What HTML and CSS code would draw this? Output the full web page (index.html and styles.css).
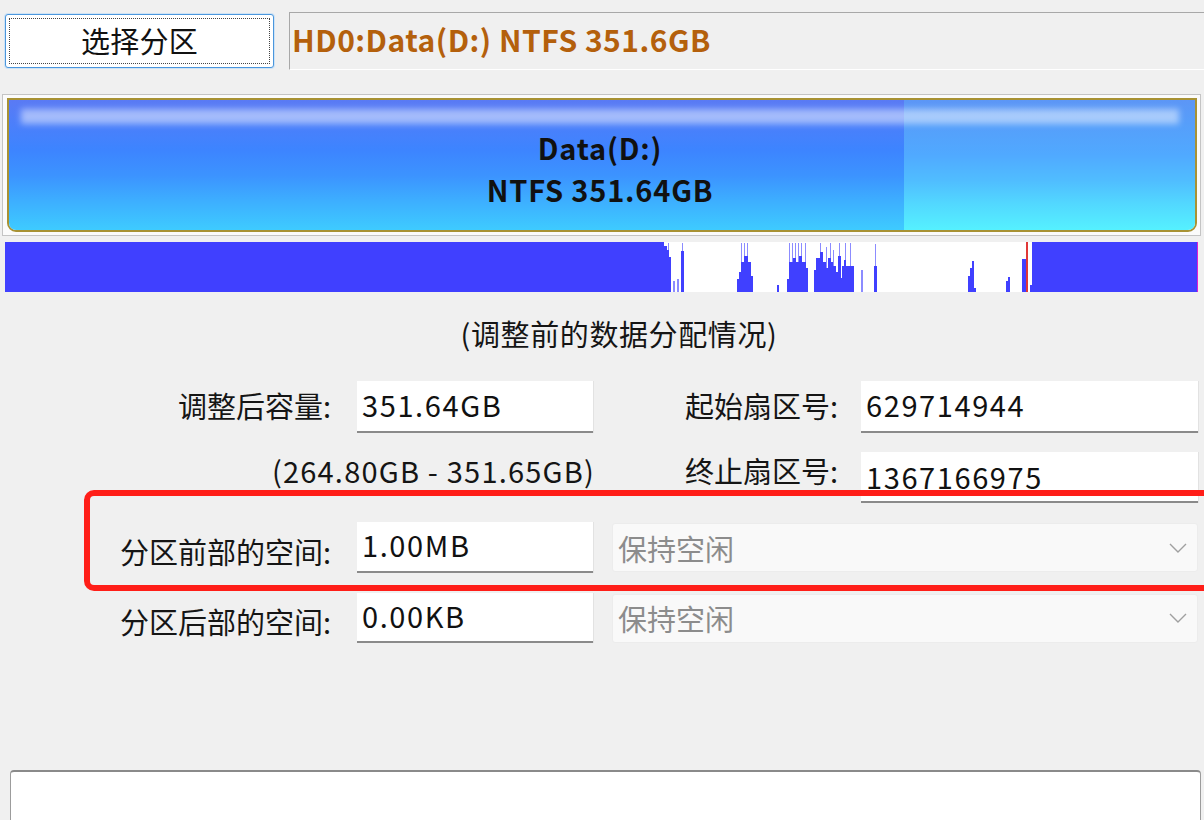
FILE: index.html
```html
<!DOCTYPE html>
<html lang="zh-CN">
<head>
<meta charset="utf-8">
<title>调整分区</title>
<link rel="stylesheet" href="styles.css">
</head>
<body>
<div class="app">
  <div class="top">
    <button class="pick"><span class="focus">选择分区</span></button>
    <div class="info">HD0:Data(D:) NTFS 351.6GB</div>
  </div>

  <div class="frame">
    <div class="part">
      <div class="segs">
        <div class="seg used"></div>
        <div class="seg free"></div>
      </div>
      <div class="shine"></div>
      <div class="plabel">Data(D:)<br>NTFS 351.64GB</div>
    </div>
  </div>

  <svg class="map" width="1193" height="50" viewBox="5 242 1193 50" preserveAspectRatio="none">
    <rect x="5" y="242" width="1193" height="50" fill="#ffffff"/>
    <g fill="#4040ff">
      <rect x="5" y="242" width="659" height="50"/>
      <rect x="664" y="246" width="3" height="46"/>
      <rect x="667" y="250" width="2" height="42"/>
      <rect x="669" y="257" width="2" height="35"/>
      <rect x="681" y="251" width="3" height="41"/>
      <rect x="737" y="279" width="3" height="13"/>
      <rect x="739" y="272" width="2" height="20"/>
      <rect x="741" y="262" width="3" height="30"/>
      <rect x="744" y="256" width="4" height="36"/>
      <rect x="748" y="262" width="3" height="30"/>
      <rect x="751" y="276" width="2" height="16"/>
      <rect x="777" y="285" width="2" height="7"/>
      <rect x="787" y="279" width="2" height="13"/>
      <rect x="789" y="262" width="4" height="30"/>
      <rect x="793" y="258" width="3" height="34"/>
      <rect x="796" y="262" width="3" height="30"/>
      <rect x="799" y="256" width="3" height="36"/>
      <rect x="802" y="262" width="4" height="30"/>
      <rect x="806" y="268" width="2" height="24"/>
      <rect x="814" y="270" width="2" height="22"/>
      <rect x="816" y="258" width="4" height="34"/>
      <rect x="820" y="252" width="3" height="40"/>
      <rect x="823" y="262" width="3" height="30"/>
      <rect x="826" y="268" width="2" height="24"/>
      <rect x="828" y="258" width="3" height="34"/>
      <rect x="831" y="262" width="2" height="30"/>
      <rect x="833" y="266" width="3" height="26"/>
      <rect x="836" y="272" width="2" height="20"/>
      <rect x="838" y="256" width="3" height="36"/>
      <rect x="841" y="278" width="1" height="14"/>
      <rect x="842" y="266" width="12" height="26"/>
      <rect x="844" y="260" width="2" height="32"/>
      <rect x="874" y="266" width="3" height="26"/>
      <rect x="968" y="276" width="2" height="16"/>
      <rect x="970" y="268" width="2" height="24"/>
      <rect x="972" y="261" width="2" height="31"/>
      <rect x="974" y="288" width="2" height="4"/>
      <rect x="1006" y="281" width="2" height="11"/>
      <rect x="1008" y="277" width="2" height="15"/>
      <rect x="1022" y="259" width="4" height="33"/>
      <rect x="1030" y="285" width="2" height="7"/>
      <rect x="1032" y="242" width="165" height="50"/>
    </g>
    <g fill="#8c8cff">
      <rect x="668" y="243" width="1" height="7"/>
      <rect x="673" y="281" width="2" height="11"/>
      <rect x="677" y="279" width="2" height="13"/>
      <rect x="682" y="243" width="1" height="8"/>
      <rect x="741" y="243" width="1" height="19"/>
      <rect x="744" y="243" width="1" height="13"/>
      <rect x="747" y="243" width="1" height="13"/>
      <rect x="789" y="243" width="1" height="19"/>
      <rect x="792" y="243" width="1" height="19"/>
      <rect x="795" y="243" width="1" height="15"/>
      <rect x="798" y="243" width="1" height="19"/>
      <rect x="801" y="243" width="1" height="13"/>
      <rect x="805" y="243" width="1" height="19"/>
      <rect x="820" y="243" width="1" height="9"/>
      <rect x="826" y="247" width="1" height="21"/>
      <rect x="830" y="243" width="1" height="15"/>
      <rect x="833" y="250" width="1" height="16"/>
      <rect x="839" y="243" width="1" height="13"/>
      <rect x="845" y="243" width="1" height="17"/>
      <rect x="850" y="243" width="1" height="23"/>
      <rect x="861" y="270" width="2" height="22"/>
      <rect x="875" y="244" width="1" height="22"/>
    </g>
    <rect x="1026" y="242" width="2" height="50" fill="#e03838"/>
    <rect x="1197" y="242" width="1" height="50" fill="#e020d0"/>
  </svg>

  <div class="caption">(调整前的数据分配情况)</div>

  <div class="form">
    <div class="row r1">
      <div class="lbl">调整后容量:</div>
      <div class="field f-small">351.64GB</div>
      <div class="lbl lbl2">起始扇区号:</div>
      <div class="field f-wide">629714944</div>
    </div>
    <div class="row r2">
      <div class="range">(264.80GB - 351.65GB)</div>
      <div class="lbl lbl3">终止扇区号:</div>
      <div class="field f-wide">1367166975</div>
    </div>
    <div class="row r3">
      <div class="lbl">分区前部的空间:</div>
      <div class="field f-small">1.00MB</div>
      <div class="select">
        <span>保持空闲</span>
        <svg class="chev" width="18" height="10" viewBox="0 0 18 10"><polyline points="1,1 9,9 17,1" fill="none" stroke="#a0a0a0" stroke-width="1.4"/></svg>
      </div>
    </div>
    <div class="row r4">
      <div class="lbl">分区后部的空间:</div>
      <div class="field f-small">0.00KB</div>
      <div class="select">
        <span>保持空闲</span>
        <svg class="chev" width="18" height="10" viewBox="0 0 18 10"><polyline points="1,1 9,9 17,1" fill="none" stroke="#a0a0a0" stroke-width="1.4"/></svg>
      </div>
    </div>
  </div>

  <div class="bottom"></div>

  <div class="annot"></div>
</div>
</body>
</html>
```

FILE: styles.css
```css
html, body {
  margin: 0;
  padding: 0;
  background: #f0f0f0;
  overflow: hidden;
}

body {
  width: 1204px;
  height: 820px;
  font-family: "Noto Sans CJK SC", "Microsoft YaHei", "Noto Sans", sans-serif;
  color: #111111;
}

.app {
  position: relative;
  width: 1204px;
  height: 820px;
  overflow: hidden;
}

/* top row */
.top {
  display: flex;
  align-items: flex-start;
  padding-top: 12px;
  height: 58px;
}

.pick {
  margin: 2px 0 0 5px;
  width: 269px;
  height: 54px;
  padding: 3px;
  background: #ffffff;
  border: 1px solid #4a96dc;
  border-radius: 3px;
  box-shadow: 0 0 0 1px #cfe3f5;
  box-sizing: border-box;
  font-family: inherit;
  display: flex;
}

.focus {
  flex: 1;
  display: flex;
  align-items: center;
  justify-content: center;
  border: 1px dotted #444;
  font-size: 29px;
  color: #111;
  letter-spacing: 0.3px;
  padding-bottom: 3px;
}

.info {
  margin-left: 15px;
  flex: 1;
  height: 58px;
  box-sizing: border-box;
  border-top: 1px solid #a8a8a8;
  border-left: 1px solid #a8a8a8;
  border-bottom: 1px solid #ffffff;
  display: flex;
  align-items: center;
  padding-left: 2px;
  padding-bottom: 4px;
  font-weight: bold;
  font-size: 30px;
  letter-spacing: 0.5px;
  color: #b4600c;
}

/* partition bar */
.frame {
  margin: 24px 0 0 2px;
  width: 1199px;
  height: 142px;
  box-sizing: border-box;
  border: 1px solid #c4c4c4;
  background: #fbfbfb;
  padding: 3px 3px 3px 4px;
}

.part {
  position: relative;
  height: 100%;
  box-sizing: border-box;
  border: 2px solid #a89234;
  border-radius: 0 0 9px 9px;
  overflow: hidden;
  display: grid;
}

.segs {
  grid-area: 1 / 1;
  display: flex;
}

.seg {
  height: 100%;
}

.used {
  width: 895px;
  background: linear-gradient(to bottom, #5a7af4 0%, #4c7ffa 18%, #3d84ff 38%, #3c93ff 58%, #3dafff 78%, #3ecbff 100%);
}

.free {
  flex: 1;
  background: linear-gradient(to bottom, #5c96f6 0%, #55a0fb 22%, #50a9ff 42%, #50bdff 62%, #52d8ff 80%, #55f1ff 100%);
}

.shine {
  position: absolute;
  left: 12px;
  right: 16px;
  top: 9px;
  height: 15px;
  background: rgba(255, 255, 255, 0.48);
  filter: blur(3px);
}

.plabel {
  grid-area: 1 / 1;
  position: relative;
  align-self: center;
  justify-self: center;
  text-align: center;
  font-weight: bold;
  font-size: 29px;
  letter-spacing: 0.8px;
  line-height: 42px;
  color: #111;
  margin-top: 6px;
  margin-left: -4px;
}

/* data map */
.map {
  display: block;
  margin: 6px 0 0 5px;
}

.caption {
  margin-top: 21px;
  height: 40px;
  line-height: 40px;
  font-size: 29px;
  letter-spacing: 0.6px;
  text-align: center;
  padding-left: 34px;
  color: #151515;
}

/* form */
.form {
  margin-top: 28px;
}

.row {
  display: flex;
  align-items: center;
}

.r1 { height: 52px; }
.r2 { height: 51px; margin-top: 19px; }
.r3 { height: 51px; margin-top: 19px; }
.r4 { height: 50px; margin-top: 20px; }

.lbl {
  width: 331px;
  text-align: right;
  font-size: 29px;
  color: #151515;
  white-space: nowrap;
  padding-bottom: 4px;
}

.r3 .lbl, .r4 .lbl {
  padding-bottom: 0;
  padding-top: 6px;
}

.lbl2 {
  width: 245px;
}

.lbl3 {
  width: 243px;
  padding-bottom: 16px;
}

.range {
  width: 595px;
  text-align: right;
  font-size: 29px;
  letter-spacing: 1.2px;
  color: #151515;
  white-space: nowrap;
  padding-bottom: 16px;
}

.field {
  height: 100%;
  box-sizing: border-box;
  background: #ffffff;
  border-bottom: 2px solid #8a8a8a;
  box-shadow: 1px 0 0 #e2e2e2;
  display: flex;
  align-items: center;
  padding-left: 5px;
  padding-bottom: 5px;
  font-size: 29px;
  letter-spacing: 1.6px;
  color: #111;
  white-space: nowrap;
}

.f-small {
  width: 236px;
  margin-left: 26px;
}

.f-wide {
  width: 337px;
  margin-left: 23px;
}

.r2 .f-wide {
  padding-bottom: 2px;
}

.select {
  margin-left: 19px;
  width: 586px;
  height: 49px;
  box-sizing: border-box;
  background: #f9f9f9;
  border: 1px solid #ececec;
  border-radius: 3px;
  display: flex;
  align-items: center;
  justify-content: space-between;
  padding: 0 10px 0 5px;
  font-size: 29px;
  color: #8c8c8c;
}

.chev {
  display: block;
}

/* bottom panel */
.bottom {
  margin: 127px 0 0 10px;
  width: 1191px;
  height: 70px;
  box-sizing: border-box;
  background: #ffffff;
  border: 1px solid #9c9c9c;
  border-top: 2px solid #8a8a8a;
  border-radius: 4px 4px 0 0;
}

/* red annotation rectangle overlay */
.annot {
  position: absolute;
  left: 84px;
  top: 490px;
  width: 1140px;
  height: 101px;
  box-sizing: border-box;
  border: 6px solid #ff1e18;
  border-radius: 10px;
  pointer-events: none;
}
```
